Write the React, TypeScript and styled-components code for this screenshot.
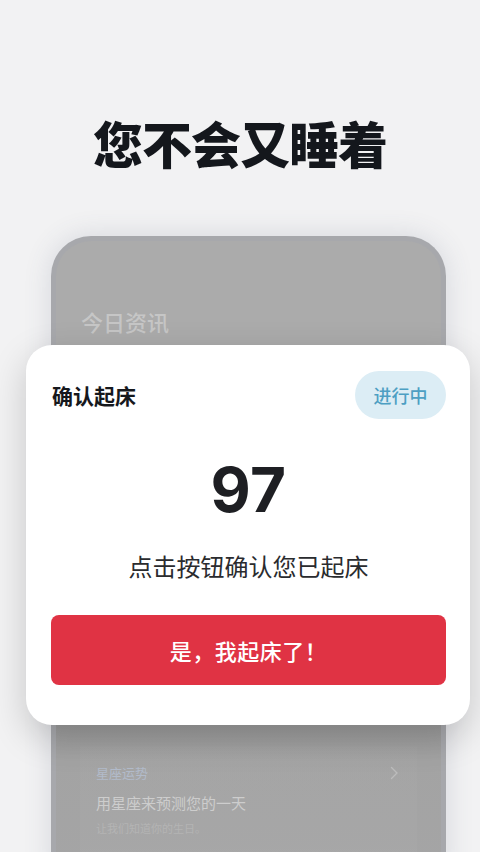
import React from "react";
import styled, { createGlobalStyle } from "styled-components";

const GlobalStyle = createGlobalStyle`
  html, body {
    margin: 0;
    padding: 0;
    background: #f2f2f3;
    font-family: "Noto Sans CJK SC", "Noto Sans", sans-serif;
  }
  #root {
    min-height: 852px;
  }
`;

const Page = styled.div`
  width: 480px;
  height: 852px;
  overflow: hidden;
  position: relative;
  background: #f2f2f3;
`;

const Headline = styled.h1`
  margin: 0;
  padding-top: 117px;
  height: 50px;
  font-size: 50px;
  line-height: 50px;
  font-weight: 900;
  color: #14171c;
  text-align: center;
  letter-spacing: -1px;
`;

const Stage = styled.div`
  position: relative;
  margin-top: 69px;
`;

const Phone = styled.div`
  margin-left: 51px;
  width: 395px;
  height: 640px;
  box-sizing: border-box;
  border: 5px solid #a7a8ac;
  border-bottom: none;
  border-radius: 40px 40px 0 0;
  background: #ababab;
  box-shadow: 0 0 28px rgba(70, 80, 110, 0.16);
  overflow: hidden;
  display: flex;
  flex-direction: column;
`;

const ScreenTitle = styled.div`
  margin: 69px 0 0 25px;
  font-size: 22px;
  line-height: 22px;
  color: #c6c6c6;
  font-weight: 500;
`;

const BottomArea = styled.div`
  margin-top: 382px;
  padding: 32px 24px 0 24px;
  height: 300px;
  background: linear-gradient(180deg, #979797 0%, #a3a3a3 20%, #a6a6a7 100%);
`;

const InfoCard = styled.div`
  padding: 0 18px 0 16px;
  height: 200px;
  background: linear-gradient(180deg, rgba(255, 255, 255, 0.015) 0%, rgba(255, 255, 255, 0.04) 100%);
  display: flex;
  flex-direction: column;
`;

const InfoHead = styled.div`
  display: flex;
  justify-content: space-between;
  align-items: center;
  margin-top: 19px;
`;

const InfoLabel = styled.span`
  font-size: 13px;
  line-height: 16px;
  color: #b2bbca;
`;

const InfoTitle = styled.div`
  margin-top: 13px;
  font-size: 15px;
  line-height: 18px;
  color: #cdcdcd;
`;

const InfoSub = styled.div`
  margin-top: 9px;
  font-size: 11px;
  line-height: 14px;
  color: #b4b4b4;
`;

const Modal = styled.div`
  position: absolute;
  left: 26px;
  top: 109px;
  width: 444px;
  box-sizing: border-box;
  padding: 26px 24px 40px 25px;
  background: #ffffff;
  border-radius: 26px;
  box-shadow: 0 12px 36px rgba(0, 0, 0, 0.18);
  display: flex;
  flex-direction: column;
  align-items: stretch;
`;

const ModalHeader = styled.div`
  display: flex;
  justify-content: space-between;
  align-items: center;
  height: 48px;
`;

const ModalTitle = styled.span`
  font-size: 21px;
  font-weight: 600;
  color: #16181c;
  margin-left: 1px;
`;

const StatusBadge = styled.span`
  width: 91px;
  height: 48px;
  border-radius: 24px;
  background: #dcedf5;
  color: #4d9fc3;
  font-size: 18px;
  font-weight: 500;
  display: flex;
  align-items: center;
  justify-content: center;
`;

const Countdown = styled.div`
  margin-top: 40px;
  font-family: Inter, Roboto, "Noto Sans", sans-serif;
  font-size: 62px;
  line-height: 62px;
  font-weight: 700;
  color: #1e1f23;
  text-align: center;
  letter-spacing: 0.5px;
`;

const Hint = styled.div`
  margin-top: 33px;
  font-size: 24px;
  line-height: 24px;
  color: #2a2b2e;
  text-align: center;
`;

const ConfirmButton = styled.button`
  margin-top: 37px;
  height: 70px;
  border: none;
  border-radius: 8px;
  background: #e03344;
  color: #ffffff;
  font-family: "Noto Sans CJK SC", "Noto Sans", sans-serif;
  font-size: 22px;
  font-weight: 500;
  letter-spacing: 0.5px;
  cursor: pointer;
`;

const Chevron = () => (
  <svg width="10" height="14" viewBox="0 0 10 14" fill="none">
    <path d="M2.5 1.5 L8 7 L2.5 12.5" stroke="#bcbcbc" strokeWidth="1.4" strokeLinecap="round" strokeLinejoin="round" />
  </svg>
);

export default function App() {
  return (
    <Page>
      <GlobalStyle />
      <Headline>您不会又睡着</Headline>
      <Stage>
        <Phone>
          <ScreenTitle>今日资讯</ScreenTitle>
          <BottomArea>
            <InfoCard>
              <InfoHead>
                <InfoLabel>星座运势</InfoLabel>
                <Chevron />
              </InfoHead>
              <InfoTitle>用星座来预测您的一天</InfoTitle>
              <InfoSub>让我们知道你的生日。</InfoSub>
            </InfoCard>
          </BottomArea>
        </Phone>
        <Modal>
          <ModalHeader>
            <ModalTitle>确认起床</ModalTitle>
            <StatusBadge>进行中</StatusBadge>
          </ModalHeader>
          <Countdown>97</Countdown>
          <Hint>点击按钮确认您已起床</Hint>
          <ConfirmButton>是，我起床了！</ConfirmButton>
        </Modal>
      </Stage>
    </Page>
  );
}
